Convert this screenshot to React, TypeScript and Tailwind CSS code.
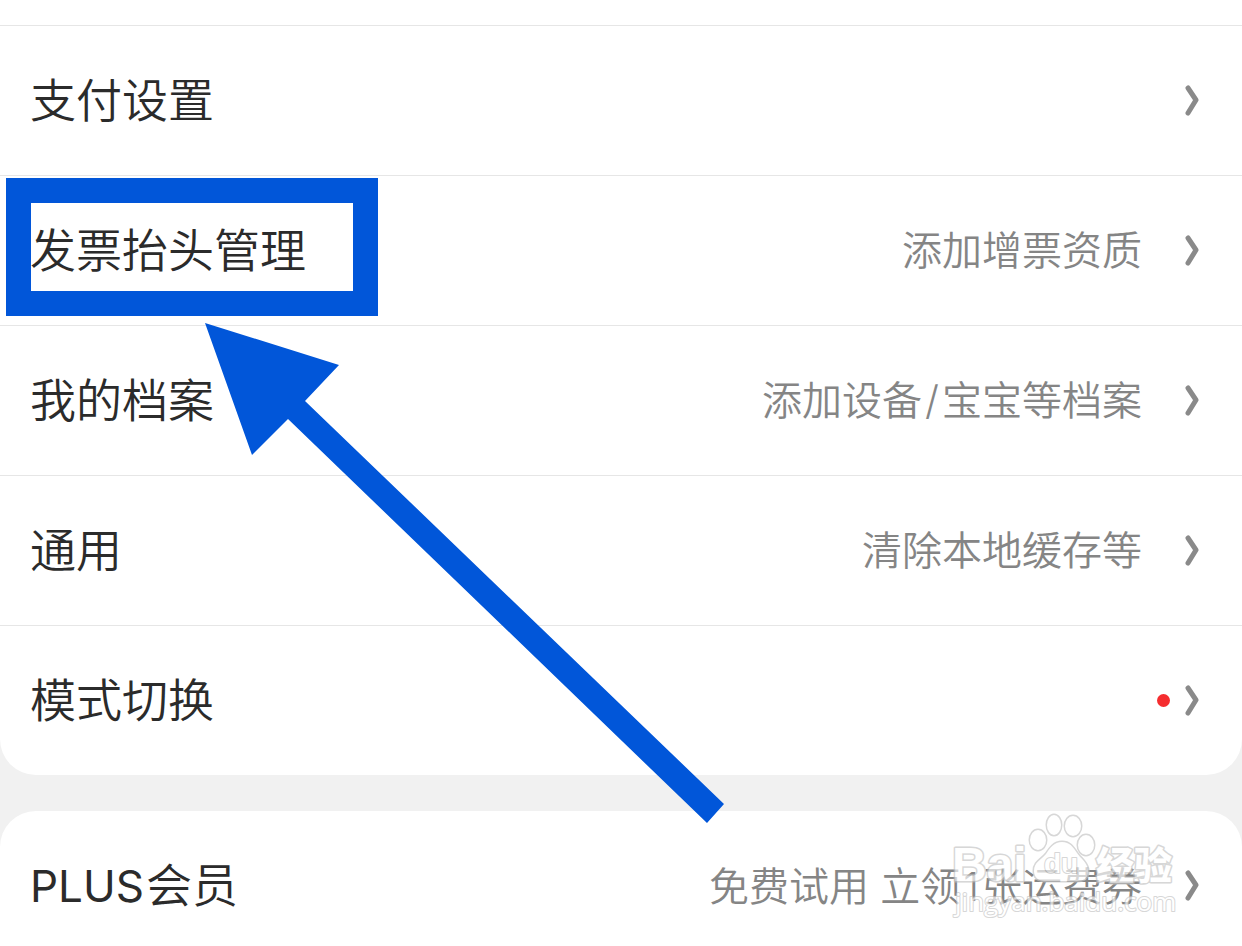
import { Fragment } from "react";

type SettingItem = {
  label: string;
  latin?: string;
  hint?: string;
  dot?: boolean;
  highlighted?: boolean;
};

const settings: SettingItem[] = [
  { label: "支付设置" },
  { label: "发票抬头管理", hint: "添加增票资质", highlighted: true },
  { label: "我的档案", hint: "添加设备/宝宝等档案" },
  { label: "通用", hint: "清除本地缓存等" },
  { label: "模式切换", dot: true },
];

const plus: SettingItem[] = [
  { latin: "PLUS", label: "会员", hint: "免费试用 立领1张运费券" },
];

const Chevron = () => (
  <svg
    className="w-4 h-8 shrink-0"
    viewBox="0 0 16 32"
    fill="none"
    stroke="#8a8a8a"
    strokeWidth="5"
    strokeLinecap="round"
    strokeLinejoin="round"
    aria-hidden="true"
  >
    <path d="M4 3 L12 15 L4 28" />
  </svg>
);

// Latin characters get some air between the Chinese ones
const Hint = ({ text }: { text: string }) => (
  <span className="mr-[42px] text-[40px] font-[350] text-[#858585] whitespace-nowrap">
    {text.split(/([/1])/).map((part, i) =>
      part === "/" || part === "1" ? (
        <span key={i} className="mx-[3px]">
          {part}
        </span>
      ) : (
        <Fragment key={i}>{part}</Fragment>
      )
    )}
  </span>
);

const SettingRow = ({ item }: { item: SettingItem }) => {
  return (
    <li className="relative border-b border-[#e6e6e6] last:border-b-0">
      <button
        type="button"
        className="flex w-full items-center justify-between py-10 pl-[30px] pr-[42px] text-left leading-[69px]"
      >
        <span className="text-[46px] font-[350] text-[#2b2b2b] whitespace-nowrap">
          {item.latin && (
            <span className="mr-0.5 text-[44px] font-normal">{item.latin}</span>
          )}
          {item.label}
        </span>
        <span className="flex items-center">
          {item.hint && <Hint text={item.hint} />}
          {item.dot && (
            <span className="mr-3.5 h-[13px] w-[13px] rounded-full bg-[#f52d2f]" />
          )}
          <Chevron />
        </span>
      </button>
      {item.highlighted && (
        <div className="pointer-events-none absolute left-1.5 top-0.5 h-[138px] w-[372px] border-[25px] border-[#0156d9]" />
      )}
    </li>
  );
};

const Arrow = () => (
  <svg
    className="pointer-events-none absolute left-[205px] top-[323px] h-[501px] w-[520px]"
    viewBox="205 323 520 501"
    aria-hidden="true"
  >
    <polygon
      fill="#0156d9"
      points="205,323 339,365 305,401 724,804 707,823 288,419 252,455"
    />
  </svg>
);

const Watermark = () => (
  <svg
    className="pointer-events-none absolute right-[62px] top-[808px] h-28 w-[230px] opacity-65"
    viewBox="950 808 230 112"
    fill="#ffffff"
    stroke="#c2c2c2"
    strokeWidth="3"
    strokeLinejoin="round"
    paintOrder="stroke"
  >
    <text x="952" y="881" fontSize="48" fontWeight="700" fontFamily="'Liberation Sans', sans-serif">
      Bai
    </text>
    <ellipse cx="1038" cy="840" rx="8" ry="10" />
    <ellipse cx="1054" cy="825" rx="7" ry="10" />
    <ellipse cx="1073" cy="826" rx="8" ry="10" />
    <ellipse cx="1086" cy="845" rx="8" ry="10" />
    <path d="M1062 842 C1054 842 1050 848 1046 854 C1041 860 1034 862 1034 871 C1034 877 1038 881 1045 881 H1077 C1085 881 1089 877 1088 869 C1086 861 1081 859 1077 853 C1073 847 1070 842 1062 842 Z" />
    <text x="1044" y="873" fontSize="28" fontWeight="700" strokeWidth="2" fontFamily="'Liberation Sans', sans-serif">
      du
    </text>
    <text x="1096" y="879" fontSize="38" fontWeight="900" fontFamily="'Noto Sans CJK SC', sans-serif">
      经验
    </text>
    <text x="955" y="911" fontSize="26" strokeWidth="2" fontWeight="500" fontFamily="'Open Sans', sans-serif">
      jingyan.baidu.com
    </text>
  </svg>
);

const App = () => {
  return (
    <div className="relative flex min-h-screen flex-col gap-9 overflow-hidden bg-[#f1f1f1] font-['Inter','Noto_Sans_CJK_SC',sans-serif]">
      <section className="rounded-b-[36px] bg-white">
        <div className="h-[26px] border-b border-[#e6e6e6]" />
        <ul>
          {settings.map((item) => (
            <SettingRow key={item.label} item={item} />
          ))}
        </ul>
      </section>

      <section className="-mb-4 rounded-t-[36px] bg-white">
        <ul>
          {plus.map((item) => (
            <SettingRow key={item.label} item={item} />
          ))}
        </ul>
      </section>

      <Arrow />
      <Watermark />
    </div>
  );
};

export default App;
